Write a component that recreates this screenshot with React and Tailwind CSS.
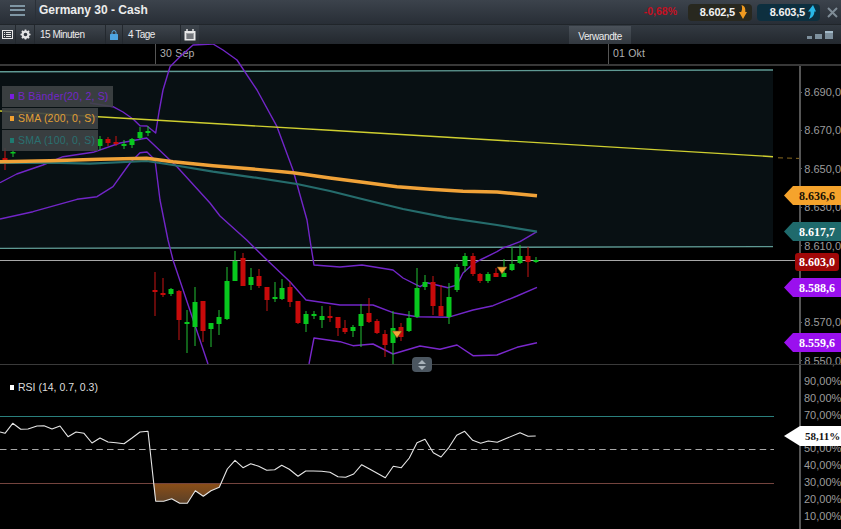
import React from "react";

const G = "#08c81e", R = "#c80a0a", GW = "#22c034", RW = "#c81414";
const candles = [
  [5,148,170,158,160,R],[13,150,157,152,153,G],
  [100,136,150,139,146,G],[108,137,146,139,143,R],[116,136,146,142,144,R],[124,140,149,144,146,G],[132,138,148,139,145,G],[140,127,140,132,138,G],[148,126,136,131,133,G],
  [155,272,316,290,292,R],[163,278,297,293,295,R],[171,288,296,289,294,G],[179,290,340,291,320,R],[187,310,353,322,324,G],[195,287,346,302,327,G],[203,301,342,301,331,R],[211,323,347,323,329,G],[219,310,335,317,324,G],[227,267,320,281,319,G],[235,251,281,261,281,G],[243,253,286,258,286,R],[251,268,290,277,285,G],[259,269,288,276,286,R],[267,287,311,287,300,R],[275,282,302,297,299,G],[282,279,300,288,299,G],[290,282,307,287,302,R],[298,301,324,301,323,R],[306,311,332,314,324,G],[314,311,319,314,316,G],[322,306,328,316,320,G],[330,306,322,316,318,R],[338,317,336,317,328,R],
  [345,320,334,328,332,R],[353,325,337,327,331,G],[361,304,347,314,326,G],[369,298,323,313,322,R],[377,319,334,321,333,R],[385,330,357,334,345,R],[393,311,364,328,343,G],[401,323,341,327,337,R],[409,311,332,318,331,G],[417,268,318,288,317,G],[425,275,290,282,287,G],[433,276,315,282,306,R],[441,285,316,306,316,R],[449,283,324,297,317,G],[457,264,292,267,290,G],[465,253,272,256,266,G],[473,253,276,256,274,R],[480,273,283,274,281,R],[488,272,283,274,281,G],[496,268,277,273,277,R],[504,259,277,273,277,G],[512,247,271,264,270,G],[520,245,264,256,263,G],[528,247,277,256,262,R],[536,257,263,260,262,G],
];

const upper = "90,103 113,106.7 123,112 133,119 140,125.7 147,126 155.7,133 159,112 163,90 170,66.7 180,56.7 193,45 213,44 223,50 237,60 257,90 277,126.7 293,170 307,220 310,240 314,265 340,267 362,265 393,270 403,278 420,286.7 427,282.7 448,287.7 457,285 463,273 473,264 480,260 497,251.7 503,248 520,241.7 537,231.7";
const middle = "0,182.7 16.7,174 43,165 63,156.7 93,152.3 120,143 146.7,138 177,166.7 210,203 220,216 246.7,240 267,260 290,281.7 306,300 340,305 373,305 393,312.7 417,316.7 448,317.3 473,310 493,305.7 517,296 537,287.3";
const lowerA = "0,219 33,211.7 77,199.3 97,196.7 113,186.7 130,163 140,152.7 147,152 155,160 160,200 168,240 173,260 208,364";
const lowerB = "309,364 314,338 340,341.7 353,345.7 373,344 393,354 420,346 440,349.3 457,345 473,355.7 497,355 517,347.3 537,342.7";
const sma200 = "0,161.7 50,160.7 100,159.3 146.7,158.3 173,161.7 213,165.7 253,169 293,172.7 330,178 363,182.3 397,186.7 430,189.3 463,191.3 497,192 537,195.7";
const sma100 = "0,163 50,162.7 90,163.7 146.7,161 173,165 213,171.7 253,177.3 297,184 330,191 363,199.3 403,209 447,217.7 497,225 537,231.7";
const rsi = "0,432 5,433.3 12.7,423.3 20.7,429.3 28,429 37,426 44,425.7 52,429 60,426 68,436.7 76,432 84,433.3 92,443 100,438 108,442 116,442.7 124,443.7 132,438 140,432 148,431.3 155.7,501.3 163.7,501.3 171.7,498.7 179.7,503.3 187.3,503.3 195.3,490.7 203.3,496.3 211,490.7 219.3,487.3 227.3,469 235,460.3 243,467.7 250.7,463.7 258.7,466.3 266.7,470.3 274.7,469.7 281.7,465.3 289.3,469.3 298,476.3 305.7,471 313.3,471 321.7,471.3 330,472.3 338,476.7 345.7,477.3 353.7,474 361.7,464.7 370,469.3 385.3,477.7 393.3,466.3 401.3,467.7 409.3,458 417,442.7 425,439.3 433.3,452.7 441,457 449,447.3 456.7,435.3 464.7,431.3 472.7,440.3 480.7,443.3 488.3,441 497.3,442.3 504.3,439.3 520,432.7 528,436.3 535.7,436";
const rsiFill = "153.3,484 155.7,501.3 163.7,501.3 171.7,498.7 179.7,503.3 187.3,503.3 195.3,490.7 203.3,496.3 211,490.7 219.3,487.3 221,484";

const priceRows = ["8.690,0","8.670,0","8.650,0","8.630,0","8.610,0","","8.570,0","8.550,0"];
const rsiRows = ["90,00%","80,00%","70,00%","","50,00%","40,00%","30,00%","20,00%","10,00%"];

function Chart() {
  return (
    <svg className="absolute left-0 top-[44px] pointer-events-none" width="841" height="485" viewBox="0 44 841 485" fill="none">
      <defs>
        <linearGradient id="oversold" x1="0" y1="0" x2="0" y2="1">
          <stop offset="0" stopColor="#8a4e18" />
          <stop offset="1" stopColor="#5a4028" />
        </linearGradient>
        <clipPath id="mainClip"><rect x="0" y="44" width="799" height="320" /></clipPath>
      </defs>
      <polygon points="0,72 773,70 773,247 0,248.5" fill="#081013" />
      <line x1="0" y1="71.8" x2="773" y2="70" stroke="#5f9a94" strokeWidth="1.4" />
      <line x1="0" y1="248.4" x2="773" y2="246.6" stroke="#5f9a94" strokeWidth="1.4" />
      <line x1="0" y1="260.5" x2="796" y2="260.5" stroke="#a8a8a8" strokeWidth="1" />
      <g clipPath="url(#mainClip)" strokeLinejoin="round">
        <polyline points={upper} stroke="#7226c8" strokeWidth="1.4" />
        <polyline points={middle} stroke="#7226c8" strokeWidth="1.4" />
        <polyline points={lowerA} stroke="#7226c8" strokeWidth="1.4" />
        <polyline points={lowerB} stroke="#7a28cc" strokeWidth="1.4" />
      </g>
      {candles.map(([x, wt, wb, bt, bb, c], i) => (
        <g key={i}>
          <rect x={x - 0.5} y={wt} width="1" height={wb - wt} fill={c === G ? GW : RW} />
          <rect x={x - 2.5} y={bt} width="5" height={Math.max(bb - bt, 1.5)} fill={c} />
        </g>
      ))}
      <line x1="0" y1="111" x2="330" y2="130.3" stroke="#cfcf30" strokeWidth="1.4" />
      <line x1="330" y1="130.3" x2="773" y2="156.7" stroke="#cfcf30" strokeWidth="1.4" />
      <line x1="778" y1="157.8" x2="799" y2="158.4" stroke="#8a6a20" strokeWidth="1" strokeDasharray="5 4" />
      <polyline points={sma100} stroke="#256c6c" strokeWidth="2.2" strokeLinejoin="round" />
      <polyline points={sma200} stroke="#f0a238" strokeWidth="3.4" strokeLinejoin="round" />
      <path d="M392 331h10l-5 7z" fill="#f5a53a" stroke="#6a4a10" strokeWidth="0.6" />
      <path d="M497 267h10l-5 7z" fill="#f5a53a" stroke="#6a4a10" strokeWidth="0.6" />
      <line x1="0" y1="416.5" x2="774" y2="416.5" stroke="#2a7f7c" />
      <line x1="0" y1="449.5" x2="774" y2="449.5" stroke="#a8a8a8" strokeDasharray="6.5 4.2" />
      <line x1="0" y1="483.5" x2="774" y2="483.5" stroke="#74443e" />
      <polygon points={rsiFill} fill="url(#oversold)" />
      <polyline points={rsi} stroke="#e6e6e6" strokeWidth="1.1" strokeLinejoin="round" />
    </svg>
  );
}

function AxisRow({ label, h }) {
  return (
    <div className={`flex items-center gap-[3px] ${h} text-[11px] text-[#9c9c9c] whitespace-nowrap`}>
      {label && <span className="w-[3px] h-px bg-[#666]" />}
      {label && <span>{label}</span>}
    </div>
  );
}

function Flame({ up }) {
  return up ? (
    <svg width="8" height="14" viewBox="0 0 8 14"><path d="M5 0l3 6.5H6.4c0 3-1.4 6-5.4 7.5 1.2-3 2-5 1.4-7.5H0z" fill="#28b8e8" /></svg>
  ) : (
    <svg width="8" height="14" viewBox="0 0 8 14"><path d="M2.5 0c3.5 1 4 3.500 3.800 7H8l-4 7-4-7h2.200C3 5 3.500 3 2.500 0z" fill="#f09a20" /></svg>
  );
}

const tagText = "font-['Liberation_Serif',serif] font-bold text-[12px] leading-none";
const tagShape = "[clip-path:polygon(0_50%,9px_0,100%_0,100%_100%,9px_100%)]";
const seg = "flex items-center border-r border-[#23282e] bg-gradient-to-b from-[#3e454d] to-[#272c32]";

export default function App() {
  return (
    <div className="relative w-[841px] h-[529px] overflow-hidden bg-black flex flex-col font-['Liberation_Sans',sans-serif]">
      {/* title bar */}
      <header className="h-[25px] shrink-0 flex items-center bg-gradient-to-b from-[#3c434c] to-[#282e36] border-b border-[#20252a]">
        <div className="w-[36px] h-full flex flex-col justify-center items-center gap-[2.5px] border-r border-[#2a3038] pb-[4px]">
          <span className="w-[15px] h-[2px] bg-[#7f96a4]" />
          <span className="w-[15px] h-[2px] bg-[#7f96a4]" />
          <span className="w-[15px] h-[2px] bg-[#7f96a4]" />
        </div>
        <h1 className="ml-[3px] mb-[5px] text-[12px] font-bold text-[#ececec] whitespace-nowrap">Germany 30 - Cash</h1>
        <span className="ml-auto text-[10.5px] font-bold text-[#c41022]">-0,68%</span>
        <div className="ml-[11px] w-[64px] h-[17px] rounded-[4px] bg-[#28281f] flex items-center justify-end gap-[4px] pr-[5px] text-[11px] tracking-[-0.2px] font-bold text-[#f2f2f2]">
          8.602,5 <Flame />
        </div>
        <div className="ml-[5px] w-[63px] h-[17px] rounded-[4px] bg-[#0d2f3f] flex items-center justify-end gap-[3px] pr-[4px] text-[11px] tracking-[-0.2px] font-bold text-[#f2f2f2]">
          8.603,5 <Flame up />
        </div>
        <svg className="ml-[7px] mr-[3px]" width="11" height="11" viewBox="0 0 11 11" stroke="#7f8c96" strokeWidth="2"><path d="M1 1l9 9M10 1l-9 9" /></svg>
      </header>

      {/* toolbar */}
      <div className="h-[19px] shrink-0 flex items-stretch bg-gradient-to-b from-[#333a42] to-[#23282e] text-[10px] tracking-[-0.5px] text-[#ececec]">
        <div className={`w-[16px] justify-center ${seg}`}>
          <svg width="11" height="9" viewBox="0 0 11 9" fill="none" stroke="#e8e8e8"><rect x="0.5" y="0.5" width="10" height="8" /><path d="M2 2.500h1M4 2.500h5M2 4.500h1M4 4.500h5M2 6.500h1M4 6.500h5" /></svg>
        </div>
        <div className={`w-[19px] justify-center ${seg}`}>
          <svg width="11" height="11" viewBox="0 0 24 24" fill="none"><circle cx="12" cy="12" r="6.5" stroke="#e4e4e4" strokeWidth="5" /><path d="M12 1v4M12 19v4M1 12h4M19 12h4M4.200 4.200l2.800 2.800M17 17l2.800 2.800M4.200 19.800L7 17M17 7l2.800-2.800" stroke="#e4e4e4" strokeWidth="3.600" /></svg>
        </div>
        <div className={`w-[71px] pl-[5px] ${seg}`}>15 Minuten</div>
        <div className={`w-[17px] justify-center ${seg}`}>
          <svg width="8" height="10" viewBox="0 0 8 10" fill="none"><path d="M2 4V2.600a2 2 0 014 0V4" stroke="#58aee6" /><rect y="4" width="8" height="6" rx="0.5" fill="#4ea6e2" /></svg>
        </div>
        <div className={`w-[58px] pl-[5px] ${seg}`}>4 Tage</div>
        <div className="w-[18px] flex items-center justify-center bg-gradient-to-b from-[#3e454d] to-[#272c32]">
          <svg width="12" height="12" viewBox="0 0 12 12" fill="none"><rect x="0.5" y="2" width="11" height="9.500" fill="#e8e8e8" /><path d="M3 0v3M9 0v3" stroke="#e8e8e8" strokeWidth="1.400" /><path d="M2 5h8M2 7h8M2 9h8M4 5v5M6 5v5M8 5v5" stroke="#33393f" strokeWidth="0.800" /></svg>
        </div>
        <div className="ml-[370px] w-[62px] mt-px pt-[2px] flex items-center justify-center bg-gradient-to-b from-[#4a5159] to-[#32383f] tracking-[-0.4px]">Verwandte</div>
        <div className="ml-auto mr-[8px] flex items-center gap-[3px]">
          <span className="w-[5px] h-[3px] mt-[5px] bg-[#7d8f9c]" />
          <span className="w-[7px] h-[5px] mt-[3px] bg-[#7d8f9c]" />
          <span className="w-[8px] h-[8px] border-t-2 border-[#a4bac8] bg-[#7d8f9c]" />
        </div>
      </div>

      {/* time axis */}
      <div className="h-[20px] shrink-0 flex text-[10.5px] tracking-[0.2px] text-[#b0b0b0]">
        <div className="ml-[155px] w-[453px] pl-[4px] pt-[2px] border-l border-[#555]">30 Sep</div>
        <div className="pl-[4px] pt-[2px] border-l border-[#555]">01 Okt</div>
      </div>
      <div className="h-[2px] shrink-0 bg-[#383838]" />

      {/* price panel */}
      <section className="h-[298px] shrink-0 flex justify-end">
        <div className="w-[42px] border-l-2 border-[#555] pt-[7px]">
          {priceRows.map((p, i) => <AxisRow key={i} label={p} h="h-[38.4px]" />)}
        </div>
      </section>
      <div className="h-px shrink-0 bg-[#3a3a3a]" />

      {/* RSI panel */}
      <section className="flex-1 flex justify-end">
        <div className="w-[42px] border-l-2 border-[#555] pt-[8px]">
          {rsiRows.map((p, i) => <AxisRow key={i} label={p} h="h-[16.8px]" />)}
        </div>
      </section>

      <Chart />

      {/* legends */}
      <div className="absolute left-[2px] top-[86px] flex flex-col items-start gap-px text-[10.5px] tracking-[0.2px] whitespace-nowrap">
        <div className="h-[21px] w-[111px] flex items-center gap-[4px] pl-[8px] bg-[#3f4446]/90 text-[#7426c8]"><span className="w-[4px] h-[5px] bg-[#7a1ee0]" />B Bänder(20, 2, S)</div>
        <div className="h-[21px] w-[96px] flex items-center gap-[4px] pl-[8px] bg-[#3f4446]/90 text-[#e2a036]"><span className="w-[4px] h-[5px] bg-[#f0a030]" />SMA (200, 0, S)</div>
        <div className="h-[21px] w-[96px] flex items-center gap-[4px] pl-[8px] bg-[#3f4446]/90 text-[#2a7070]"><span className="w-[4px] h-[5px] bg-[#1f7a70]" />SMA (100, 0, S)</div>
      </div>
      <div className="absolute left-[10px] top-[380px] flex items-center gap-[4px] text-[10.5px] text-[#dedede] whitespace-nowrap">
        <span className="w-[4px] h-[5px] bg-white" />RSI (14, 0.7, 0.3)
      </div>

      {/* scroll handle */}
      <div className="absolute left-[412px] top-[357px] w-[20px] h-[15px] rounded-[4px] bg-[#4b5660] flex flex-col items-center justify-center gap-[2px]">
        <svg width="8" height="4" viewBox="0 0 8 4"><path d="M4 0l4 4H0z" fill="#a8b2ba" /></svg>
        <svg width="8" height="4" viewBox="0 0 8 4"><path d="M4 4L0 0h8z" fill="#a8b2ba" /></svg>
      </div>

      {/* price tags */}
      <div className={`absolute left-[784px] top-[186px] w-[57px] h-[19px] pl-[15px] flex items-center bg-[#f5a32c] text-[#1c1204] ${tagText} ${tagShape}`}>8.636,6</div>
      <div className={`absolute left-[784px] top-[222px] w-[57px] h-[19px] pl-[15px] flex items-center bg-[#1f6a6c] text-white ${tagText} ${tagShape}`}>8.617,7</div>
      <div className={`absolute left-[795px] top-[253px] w-[44px] h-[18px] rounded-[3px] flex items-center justify-center bg-[#a00808] text-white ${tagText}`}>8.603,0</div>
      <div className={`absolute left-[784px] top-[278px] w-[57px] h-[19px] pl-[15px] flex items-center bg-[#9a10ee] text-white ${tagText} ${tagShape}`}>8.588,6</div>
      <div className={`absolute left-[784px] top-[333px] w-[57px] h-[19px] pl-[15px] flex items-center bg-[#9a10ee] text-white ${tagText} ${tagShape}`}>8.559,6</div>
      <div className="absolute left-[784px] top-[426px] w-[57px] h-[20px] pl-[21px] flex items-center bg-white text-[#111] whitespace-nowrap font-['Liberation_Serif',serif] font-bold text-[11px] leading-none [clip-path:polygon(0_50%,16px_0,100%_0,100%_100%,16px_100%)]">58,11%</div>
    </div>
  );
}
